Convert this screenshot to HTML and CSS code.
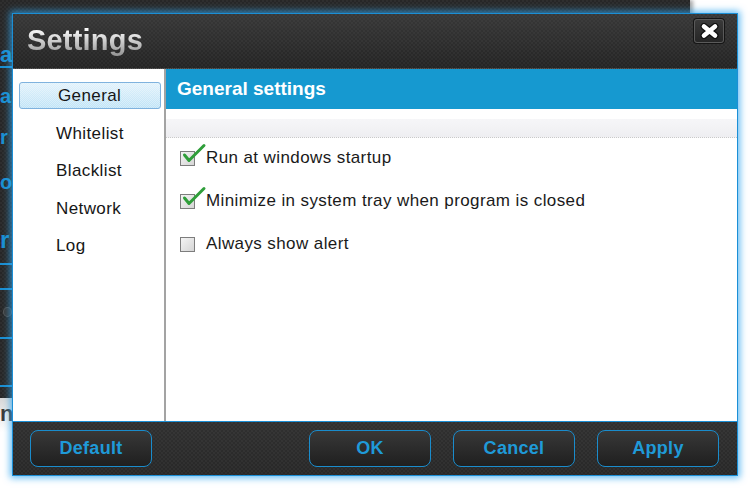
FILE: index.html
```html
<!DOCTYPE html>
<html lang="en">
<head>
<meta charset="utf-8">
<title>Settings</title>
<link rel="stylesheet" href="styles.css">
</head>
<body>
<div class="desktop">
  <div class="behind">
    <div class="behind-labels">
      <div class="bl bl-1">a</div>
      <div class="bl bl-2">a</div>
      <div class="bl bl-3">r</div>
      <div class="bl bl-4">o</div>
      <div class="bl bl-5">r</div>
      <div class="bl-line l0"></div>
      <div class="bl-line l1"></div>
      <div class="bl-line l2"></div>
      <div class="bl-knob"></div>
      <div class="bl-line l3"></div>
      <div class="bl-line l4"></div>
    </div>
  </div>
  <div class="behind-foot"><span class="bf-text">n</span></div>

  <div class="dialog">
    <header class="titlebar">
      <h1 class="title">Settings</h1>
      <button class="close" aria-label="Close">
        <svg width="19" height="16" viewBox="0 0 19 16">
          <path d="M4 3.5 L15 12.5 M15 3.5 L4 12.5" stroke="#111" stroke-width="7" stroke-linecap="round"/>
          <path d="M4 3.5 L15 12.5 M15 3.5 L4 12.5" stroke="#fff" stroke-width="4.6" stroke-linecap="round"/>
        </svg>
      </button>
    </header>

    <div class="main">
      <nav class="sidebar">
        <div class="nav-item active">General</div>
        <div class="nav-item">Whitelist</div>
        <div class="nav-item">Blacklist</div>
        <div class="nav-item">Network</div>
        <div class="nav-item">Log</div>
      </nav>
      <section class="content">
        <div class="content-header">General settings</div>
        <div class="strip"></div>
        <ul class="options">
          <li class="option">
            <span class="cb checked">
              <svg class="tick" width="26" height="22" viewBox="0 0 26 22"><path d="M3.5 12 L8 17.5 L23 2.5" fill="none" stroke="#2f9e3a" stroke-width="3" stroke-linecap="round" stroke-linejoin="round"/></svg>
            </span>
            <span class="opt-label">Run at windows startup</span>
          </li>
          <li class="option">
            <span class="cb checked">
              <svg class="tick" width="26" height="22" viewBox="0 0 26 22"><path d="M3.5 12 L8 17.5 L23 2.5" fill="none" stroke="#2f9e3a" stroke-width="3" stroke-linecap="round" stroke-linejoin="round"/></svg>
            </span>
            <span class="opt-label">Minimize in system tray when program is closed</span>
          </li>
          <li class="option">
            <span class="cb"></span>
            <span class="opt-label">Always show alert</span>
          </li>
        </ul>
      </section>
    </div>

    <footer class="footer">
      <button class="btn btn-default">Default</button>
      <div class="spacer"></div>
      <button class="btn btn-ok">OK</button>
      <button class="btn">Cancel</button>
      <button class="btn">Apply</button>
    </footer>
  </div>
</div>
</body>
</html>
```

FILE: styles.css
```css
* { box-sizing: border-box; }

html, body {
  margin: 0;
  padding: 0;
  background: #ffffff;
  font-family: "Liberation Sans", Arial, sans-serif;
}

.desktop {
  position: relative;
  width: 750px;
  height: 488px;
  overflow: hidden;
  background: #ffffff;
}

/* window behind the dialog */
.behind {
  position: absolute;
  left: 0;
  top: 0;
  width: 690px;
  height: 402px;
  background-color: #272727;
  background-image: repeating-conic-gradient(rgba(255,255,255,0.035) 0 25%, transparent 0 50%);
  background-size: 4px 4px;
  box-shadow: 3px 0 4px rgba(0,0,0,0.35);
}

.behind-labels {
  position: absolute;
  left: 0;
  top: 0;
  width: 12px;
  height: 400px;
}

.bl {
  position: absolute;
  left: 0;
  color: #1b8fd2;
  font-weight: bold;
  line-height: 1;
}
.bl-1 { top: 44px; font-size: 22px; }
.bl-2 { top: 86px; font-size: 20px; }
.bl-3 { top: 127px; font-size: 20px; }
.bl-4 { top: 172px; font-size: 20px; }
.bl-5 { top: 228px; font-size: 24px; }

.bl-line {
  position: absolute;
  left: 0;
  right: 0;
  height: 2px;
  background: #1b8fd2;
}
.bl-line.l0 { top: 66px; }
.bl-line.l1 { top: 263px; }
.bl-line.l2 { top: 288px; }
.bl-line.l3 { top: 337px; }
.bl-line.l4 { top: 385px; }
.bl-knob {
  position: absolute;
  left: 3px;
  top: 307px;
  width: 9px;
  height: 10px;
  border-radius: 50%;
  background: #3a3a3a;
  border: 1px solid #555;
}

.behind-foot {
  position: absolute;
  left: 0;
  top: 398px;
  width: 40px;
  height: 34px;
  background: linear-gradient(#d8d8d8, #ffffff);
}
.bf-text {
  position: absolute;
  left: 0;
  top: 3px;
  font-size: 22px;
  font-weight: bold;
  color: #3a3a3a;
}

/* dialog */
.dialog {
  position: absolute;
  left: 12px;
  top: 13px;
  width: 726px;
  height: 463px;
  display: flex;
  flex-direction: column;
  border: 1px solid #1b8fd6;
  box-shadow: 0 0 7px 2px rgba(50, 165, 240, 0.75);
  background: #ffffff;
}

.titlebar {
  height: 55px;
  flex: none;
  display: flex;
  align-items: flex-start;
  justify-content: space-between;
  padding: 0 13px 0 14px;
  background-color: #2b2b2b;
  background-image:
    repeating-conic-gradient(rgba(255,255,255,0.03) 0 25%, transparent 0 50%),
    linear-gradient(#383838, #242424);
  background-size: 4px 4px, 100% 100%;
  border-bottom: 1px dotted #555;
}

.title {
  margin: 6px 0 0 0;
  font-size: 29px;
  letter-spacing: 0.2px;
  line-height: 40px;
  font-weight: bold;
  color: #e8e8e8;
  background: linear-gradient(#ffffff 20%, #9a9a9a 85%);
  -webkit-background-clip: text;
  background-clip: text;
  -webkit-text-fill-color: transparent;
}

.close {
  margin-top: 5px;
  width: 30px;
  height: 24px;
  padding: 0;
  display: flex;
  align-items: center;
  justify-content: center;
  background: linear-gradient(#3a3a3a, #262626);
  border: 1px solid #5a5a5a;
  border-radius: 3px;
  box-shadow: 0 0 0 1px #151515;
}

.main {
  flex: 1;
  display: flex;
  min-height: 0;
}

.sidebar {
  width: 153px;
  flex: none;
  display: flex;
  flex-direction: column;
  gap: 10.5px;
  padding-top: 13px;
  border-right: 2px solid #a3a3a3;
  background: #ffffff;
}

.nav-item {
  height: 27px;
  margin: 0 3px 0 6px;
  padding-left: 36px;
  border: 1px solid transparent;
  border-radius: 3px;
  font-size: 17px;
  letter-spacing: 0.4px;
  line-height: 25px;
  color: #161616;
}

.nav-item.active {
  padding-left: 38px;
  border-color: #7fb2de;
  background-color: #c9e7f8;
  background-image:
    repeating-conic-gradient(rgba(255,255,255,0.35) 0 25%, transparent 0 50%),
    linear-gradient(#e0f1fb, #bde2f6);
  background-size: 2px 2px, 100% 100%;
}

.content {
  flex: 1;
  display: flex;
  flex-direction: column;
}

.content-header {
  height: 40px;
  flex: none;
  padding-left: 11px;
  background: #1699d0;
  color: #ffffff;
  font-size: 19px;
  font-weight: bold;
  line-height: 40px;
}

.strip {
  height: 19px;
  margin-top: 10px;
  flex: none;
  background: linear-gradient(#f6f6f8, #eeeef1);
  border-bottom: 1px dotted #c9c9c9;
}

.options {
  list-style: none;
  margin: 0;
  padding: 9px 0 0 14px;
  display: flex;
  flex-direction: column;
  gap: 21px;
}

.option {
  height: 22px;
  display: flex;
  align-items: center;
  gap: 11px;
  font-size: 17px;
  letter-spacing: 0.4px;
  color: #1a1a1a;
}

.cb {
  position: relative;
  width: 15px;
  height: 15px;
  flex: none;
  border: 1px solid #7d7d7d;
  background: linear-gradient(135deg, #f4f4f4, #d5d5d5);
}

.tick {
  position: absolute;
  left: 0;
  top: -9px;
}

.footer {
  height: 54px;
  flex: none;
  display: flex;
  align-items: flex-start;
  gap: 22px;
  padding: 8px 18px 0 17px;
  border-top: 1px solid #1b8fd6;
  background-color: #2c2c2c;
  background-image:
    repeating-conic-gradient(rgba(255,255,255,0.03) 0 25%, transparent 0 50%),
    linear-gradient(#303030, #282828);
  background-size: 4px 4px, 100% 100%;
}

.spacer { flex: 1; }

.btn {
  width: 122px;
  height: 37px;
  padding: 0;
  border: 1px solid #1a8ccc;
  border-radius: 8px;
  background: linear-gradient(#383838, #1f1f1f);
  color: #1f9ad8;
  font-family: "Liberation Sans", Arial, sans-serif;
  font-size: 18px;
  font-weight: bold;
  letter-spacing: 0.3px;
}
```
